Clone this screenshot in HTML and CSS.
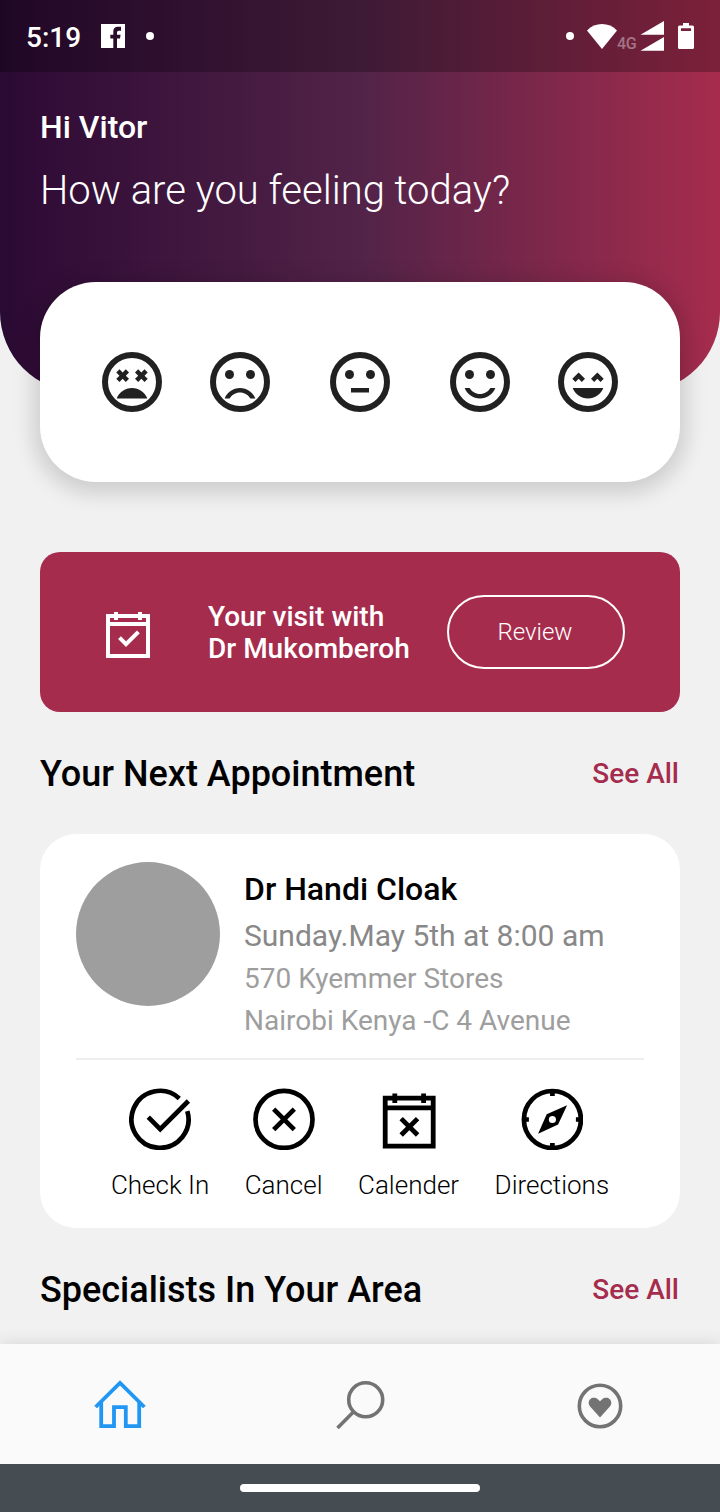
FILE: index.html
```html
<!DOCTYPE html>
<html lang="en">
<head>
<meta charset="utf-8">
<title>Health Home</title>
<link rel="stylesheet" href="styles.css">
</head>
<body>
<div class="screen">
  <header class="hero">
    <div class="status-bar">
      <span class="time">5:19</span>
      <svg class="facebook" width="24" height="24" viewBox="0 0 24 24"><path fill="#fff" fill-rule="evenodd" d="M0 0H24V24H16V14.500H19L19.600 10.700H16V8.500Q16 6.700 17.700 6.700H20V2.700H17Q12.300 2.700 12.300 7.500V10.700H9.300V14.500H12.300V24H0Z"/></svg>
      <span class="dot"></span>
      <span class="spacer"></span>
      <span class="dot"></span>
      <svg class="wifi" width="30" height="25" viewBox="0 0 30 25"><path fill="#fff" d="M0 6.400Q6.500 0 15 0T30 6.400L15 25Z"/></svg>
      <span class="network">4G</span>
      <svg class="signal" width="24" height="30" viewBox="0 0 24 30"><path fill="#fff" d="M24 0V13.700H.5ZM24 16V29.700H.5Z"/></svg>
      <svg class="battery" width="16" height="26" viewBox="0 0 16 26"><path fill="#fff" fill-rule="evenodd" d="M5 0H11V2.500H14.500Q16 2.500 16 4V24.500Q16 26 14.500 26H1.500Q0 26 0 24.500V4Q0 2.500 1.500 2.500H5ZM3 5.300V8H13V5.300Z"/></svg>
    </div>
    <div class="greeting">
      <p class="hello">Hi Vitor</p>
      <p class="question">How are you feeling today?</p>
    </div>
  </header>

  <main class="content">
    <section class="moods">
      <svg class="face" viewBox="2 2 20 20"><circle class="face-ring" cx="12" cy="12" r="9"/><path d="M12 14c-2.330 0-4.310 1.460-5.110 3.500h10.220c-.8-2.040-2.780-3.500-5.110-3.500zM16.180 7.760l-1.060 1.060-1.060-1.060L13 8.820l1.060 1.060L13 10.940 14.060 12l1.060-1.060L16.180 12l1.060-1.060-1.060-1.060 1.060-1.060zM7.820 12l1.060-1.060L9.940 12 11 10.940 9.940 9.880 11 8.820 9.940 7.760 8.880 8.820 7.820 7.760 6.760 8.820l1.060 1.060-1.060 1.060z"/></svg>
      <svg class="face" viewBox="2 2 20 20"><circle class="face-ring" cx="12" cy="12" r="9"/><circle cx="8.500" cy="9.500" r="1.500"/><circle cx="15.500" cy="9.500" r="1.500"/><path d="M12 14c-2.330 0-4.320 1.450-5.120 3.500h1.670c.69-1.190 1.970-2 3.450-2s2.750.81 3.450 2h1.670c-.8-2.050-2.790-3.500-5.120-3.500z"/></svg>
      <svg class="face face-middle" viewBox="2 2 20 20"><circle class="face-ring" cx="12" cy="12" r="9"/><circle cx="8.500" cy="9.500" r="1.500"/><circle cx="15.500" cy="9.500" r="1.500"/><path d="M9 14h6v1.500H9z"/></svg>
      <svg class="face" viewBox="2 2 20 20"><circle class="face-ring" cx="12" cy="12" r="9"/><circle cx="8.500" cy="9.500" r="1.500"/><circle cx="15.500" cy="9.500" r="1.500"/><path d="M12 16c-1.480 0-2.750-.81-3.450-2H6.880c.8 2.050 2.790 3.500 5.120 3.500s4.320-1.450 5.120-3.500h-1.670c-.69 1.190-1.970 2-3.450 2z"/></svg>
      <svg class="face" viewBox="2 2 20 20"><circle class="face-ring" cx="12" cy="12" r="9"/><path d="M12 17.500c2.330 0 4.310-1.460 5.110-3.500H6.890c.8 2.040 2.780 3.500 5.110 3.500zM7.820 12l1.060-1.060L9.940 12 11 10.940 8.880 8.820 6.760 10.940zM13 10.940 14.060 12l1.060-1.060L16.180 12l1.060-1.060-2.120-2.120z"/></svg>
    </section>

    <section class="visit">
      <svg class="line-icon" width="44" height="46" viewBox="0 0 44 46" stroke-width="4"><path d="M2 4H42V44H2ZM2 12H42M10 0V8M34 0V8"/><path d="M13.500 25.600L20 32.200L32.400 19.800"/></svg>
      <p class="visit-text">Your visit with<br>Dr Mukomberoh</p>
      <button class="review">Review</button>
    </section>

    <div class="section-head">
      <h2>Your Next Appointment</h2>
      <a class="see-all">See All</a>
    </div>

    <section class="appointment">
      <div class="doctor">
        <div class="avatar"></div>
        <div class="details">
          <p class="name">Dr Handi Cloak</p>
          <p class="date">Sunday.May 5th at 8:00 am</p>
          <p class="address">570 Kyemmer Stores</p>
          <p class="address">Nairobi Kenya -C 4 Avenue</p>
        </div>
      </div>
      <div class="actions">
        <div class="action">
          <svg class="line-icon" width="62" height="62" viewBox="0 -.4 62 62" stroke-width="4.700"><path d="M50.300 10A28.500 28.500 0 1 0 58.300 22.800"/><path d="M19.300 28.800L31.200 40.800L59.400 12.600"/></svg>
          <span>Check In</span>
        </div>
        <div class="action">
          <svg class="line-icon" width="62" height="62" viewBox="0 -.4 62 62" stroke-width="4.700"><circle cx="31" cy="31" r="28.500"/><path d="M20.700 20.700L41.300 41.300M41.300 20.700L20.700 41.300"/></svg>
          <span>Cancel</span>
        </div>
        <div class="action">
          <svg class="line-icon" width="62" height="62" viewBox="-4 -4.500 51.667 51.667" stroke-width="4"><path d="M2 4H42V44H2ZM2 12H42M10 0V8M34 0V8"/><path d="M15.300 21L29 34.700M29 21L15.300 34.700"/></svg>
          <span>Calender</span>
        </div>
        <div class="action">
          <svg class="line-icon" width="62" height="62" viewBox="-.4 -.5 62 62" stroke-width="4.700"><circle cx="31" cy="31" r="28.500"/><path d="M31 2V7.500M31 54.500V60M2 31H7.500M54.500 31H60"/><path class="needle" d="M45.700 16.700L36.700 36L16.700 45.300L25.300 25.700ZM31 27.400A3.600 3.600 0 1 0 31 34.600A3.600 3.600 0 1 0 31 27.400Z"/></svg>
          <span>Directions</span>
        </div>
      </div>
    </section>

    <div class="section-head">
      <h2>Specialists In Your Area</h2>
      <a class="see-all">See All</a>
    </div>
  </main>

  <nav class="tabs">
    <div class="tab active"><svg class="line-icon" width="52" height="50" viewBox="0 0 52 50" stroke-width="3.800"><path d="M1.600 27L26 2.900L50.400 27"/><path d="M7.200 22V46.200H20V27.200H31.800V46.200H45.200V22"/></svg></div>
    <div class="tab"><svg class="line-icon" width="49" height="50" viewBox="0 0 49 50" stroke-width="3.600"><circle cx="29.700" cy="19.700" r="17"/><path d="M17.600 31.800L1.500 47.900"/></svg></div>
    <div class="tab"><svg class="line-icon" width="46" height="46" viewBox="0 0 46 46" stroke-width="3.600"><circle cx="23" cy="23" r="20.700"/><path class="heart" d="M23 18.300L20.800 16.300C17 13 11.700 15.500 11.700 19.700C11.700 21.700 12.600 23 14 24.500L23 34.600L32 24.500C33.400 23 34.300 21.700 34.300 19.700C34.300 15.500 29 13 25.200 16.300Z"/></svg></div>
  </nav>
  <div class="system-bar"><span class="pill"></span></div>
</div>
</body>
</html>
```
FILE: styles.css
```css
* { box-sizing: border-box; }

body {
  margin: 0;
  font-family: Roboto, sans-serif;
  color: #000;
}

p, h2 { margin: 0; }

svg { display: block; flex: none; }

.screen {
  width: 720px;
  height: 1512px;
  display: flex;
  flex-direction: column;
  overflow: hidden;
  background: #f1f1f1;
}

.hero {
  flex: none;
  height: 392px;
  overflow: hidden;
  border-radius: 0 0 80px 80px;
  background: linear-gradient(90deg, #280a32 0%, #300c36 5%, #522348 50%, #a62c4d 100%);
  color: #fff;
}

.status-bar {
  height: 72px;
  display: flex;
  align-items: center;
  padding: 0 26px;
  background: rgba(0, 0, 0, 0.25);
}

.time {
  width: 75px;
  font-size: 28px;
  font-weight: 500;
  line-height: 34px;
  padding-top: 4px;
}

.facebook { margin-right: 21px; }

.dot {
  width: 8px;
  height: 8px;
  border-radius: 50%;
  background: #fff;
}

.spacer { flex: 1; }

.wifi { margin-left: 13px; }

.network {
  width: 23px;
  padding-top: 16px;
  font-size: 16px;
  font-weight: 500;
  line-height: 18px;
  letter-spacing: -0.3px;
  color: rgba(255, 255, 255, 0.4);
}

.battery { margin-left: 14px; }

.greeting { padding: 36px 40px 0; }

.hello {
  font-size: 32px;
  font-weight: 500;
  line-height: 38px;
}

.question {
  margin-top: 21px;
  font-size: 40px;
  font-weight: 300;
  line-height: 48px;
}

.content {
  flex: 1;
  min-height: 0;
  padding: 0 40px;
}

.moods {
  position: relative;
  height: 200px;
  margin-top: -110px;
  display: flex;
  align-items: center;
  justify-content: center;
  gap: 48px;
  border-radius: 56px;
  background: #fff;
  box-shadow: 0 5px 20px 7px rgba(0, 0, 0, 0.145);
}

.face {
  width: 60px;
  height: 60px;
  fill: #212121;
}

.face-ring {
  fill: none;
  stroke: #212121;
  stroke-width: 2;
}

.face-middle { margin: 0 12px; }

.line-icon {
  fill: none;
  stroke: currentColor;
}

.visit {
  height: 160px;
  margin-top: 70px;
  padding: 0 55px 0 66px;
  display: flex;
  align-items: center;
  border-radius: 20px;
  background: #a62c4d;
  color: #fff;
}

.visit .line-icon { margin-top: 6px; }

.visit-text {
  margin-left: 58px;
  padding-top: 2px;
  font-size: 28px;
  font-weight: 500;
  line-height: 32px;
}

.review {
  width: 178px;
  height: 74px;
  margin-left: auto;
  padding: 0 2px 0 0;
  border: 2px solid #fff;
  border-radius: 37px;
  background: none;
  color: #fff;
  font: 300 24px/30px Roboto, sans-serif;
}

.section-head {
  height: 44px;
  margin-top: 40px;
  display: flex;
  align-items: center;
  justify-content: space-between;
}

.section-head h2 {
  font-size: 36px;
  font-weight: 500;
  line-height: 44px;
}

.see-all {
  padding-right: 1px;
  font-size: 28px;
  font-weight: 500;
  line-height: 34px;
  color: #a62c4d;
}

.appointment {
  height: 394px;
  margin-top: 38px;
  padding: 28px 36px 0;
  border-radius: 36px;
  background: #fff;
}

.doctor {
  height: 198px;
  display: flex;
  gap: 24px;
  border-bottom: 2px solid #eee;
}

.avatar {
  width: 144px;
  height: 144px;
  border-radius: 50%;
  background: #9e9e9e;
}

.details { padding-top: 8px; }

.name {
  font-size: 32px;
  font-weight: 500;
  line-height: 38px;
}

.date {
  margin-top: 10px;
  font-size: 30px;
  line-height: 36px;
  color: #888;
}

.address {
  font-size: 28px;
  line-height: 42px;
  color: #9e9e9e;
}

.date + .address { margin-top: 4px; }

.actions {
  display: flex;
  justify-content: center;
  gap: 35.500px;
  padding-top: 28px;
}

.action {
  display: flex;
  flex-direction: column;
  align-items: center;
  gap: 20px;
  font-size: 26px;
  font-weight: 300;
  line-height: 30px;
}

.needle {
  fill: currentColor;
  fill-rule: evenodd;
  stroke: none;
}

.tabs {
  position: relative;
  flex: none;
  height: 120px;
  display: grid;
  grid-template-columns: repeat(3, 1fr);
  background: #fafafa;
  box-shadow: 0 0 16px rgba(0, 0, 0, 0.12);
}

.tab {
  display: flex;
  align-items: center;
  justify-content: center;
  padding-top: 2px;
  color: #737373;
}

.tab.active { color: #2196f3; }

.tab:last-child { padding-top: 3px; }

.heart {
  fill: currentColor;
  stroke: none;
}

.system-bar {
  position: relative;
  flex: none;
  height: 48px;
  display: flex;
  align-items: center;
  justify-content: center;
  background: #454d53;
}

.pill {
  width: 240px;
  height: 8px;
  border-radius: 4px;
  background: #fff;
}
```
